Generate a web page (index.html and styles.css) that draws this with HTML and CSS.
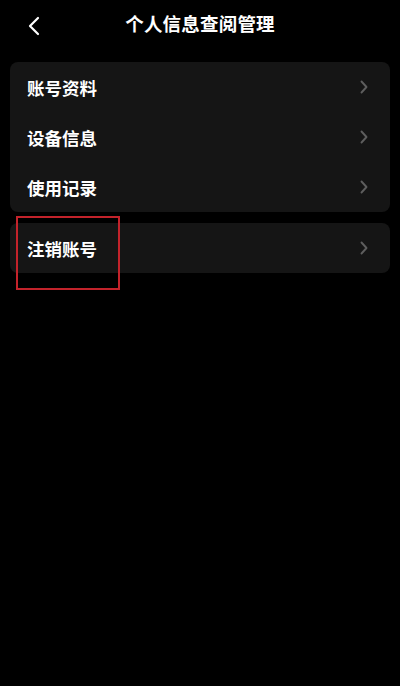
FILE: index.html
```html
<!DOCTYPE html>
<html lang="zh">
<head>
<meta charset="utf-8">
<link rel="stylesheet" href="styles.css">
</head>
<body>
<div class="page">
  <header class="nav">
    <svg class="back" width="14" height="20" viewBox="0 0 14 20"><path d="M11 2 L3 10 L11 18" fill="none" stroke="#fff" stroke-width="2.2" stroke-linecap="round" stroke-linejoin="round"/></svg>
    <h1 class="title">个人信息查阅管理</h1>
  </header>
  <div class="card">
    <div class="row"><span class="label">账号资料</span><svg class="chev" width="8" height="14" viewBox="0 0 8 14"><path d="M1.5 1.5 L6.5 7 L1.5 12.5" fill="none" stroke="#5e5e5e" stroke-width="1.9" stroke-linecap="round" stroke-linejoin="round"/></svg></div>
    <div class="row"><span class="label">设备信息</span><svg class="chev" width="8" height="14" viewBox="0 0 8 14"><path d="M1.5 1.5 L6.5 7 L1.5 12.5" fill="none" stroke="#5e5e5e" stroke-width="1.9" stroke-linecap="round" stroke-linejoin="round"/></svg></div>
    <div class="row"><span class="label">使用记录</span><svg class="chev" width="8" height="14" viewBox="0 0 8 14"><path d="M1.5 1.5 L6.5 7 L1.5 12.5" fill="none" stroke="#5e5e5e" stroke-width="1.9" stroke-linecap="round" stroke-linejoin="round"/></svg></div>
  </div>
  <div class="card card2">
    <div class="row"><span class="label">注销账号</span><svg class="chev" width="8" height="14" viewBox="0 0 8 14"><path d="M1.5 1.5 L6.5 7 L1.5 12.5" fill="none" stroke="#5e5e5e" stroke-width="1.9" stroke-linecap="round" stroke-linejoin="round"/></svg></div>
    <div class="highlight"></div>
  </div>
</div>
</body>
</html>
```

FILE: styles.css
```css
html, body {
  margin: 0;
  padding: 0;
  background: #000;
}
body {
  width: 400px;
  height: 686px;
  overflow: hidden;
  font-family: "Noto Sans CJK SC", "Noto Sans", sans-serif;
  color: #fff;
}
.page {
  padding: 0 10px;
}
.nav {
  position: relative;
  height: 48px;
  display: flex;
  align-items: center;
  justify-content: center;
}
.back {
  position: absolute;
  left: 17px;
  top: 16px;
}
.title {
  margin: 0;
  font-size: 18.5px;
  font-weight: 700;
  line-height: 1;
  margin-top: -2px;
  letter-spacing: 0.2px;
}
.card {
  margin-top: 14px;
  background: #151515;
  border-radius: 8px;
}
.card2 {
  position: relative;
  margin-top: 11px;
}
.row {
  height: 50px;
  display: flex;
  align-items: center;
  justify-content: space-between;
  padding: 0 22px 0 17px;
}
.label {
  font-size: 17.5px;
  font-weight: 700;
  line-height: 1;
  margin-top: 2px;
}
.chev {
  display: block;
}
.highlight {
  position: absolute;
  left: 6px;
  top: -7px;
  width: 100px;
  height: 70px;
  border: 2px solid #c3232b;
}
```
